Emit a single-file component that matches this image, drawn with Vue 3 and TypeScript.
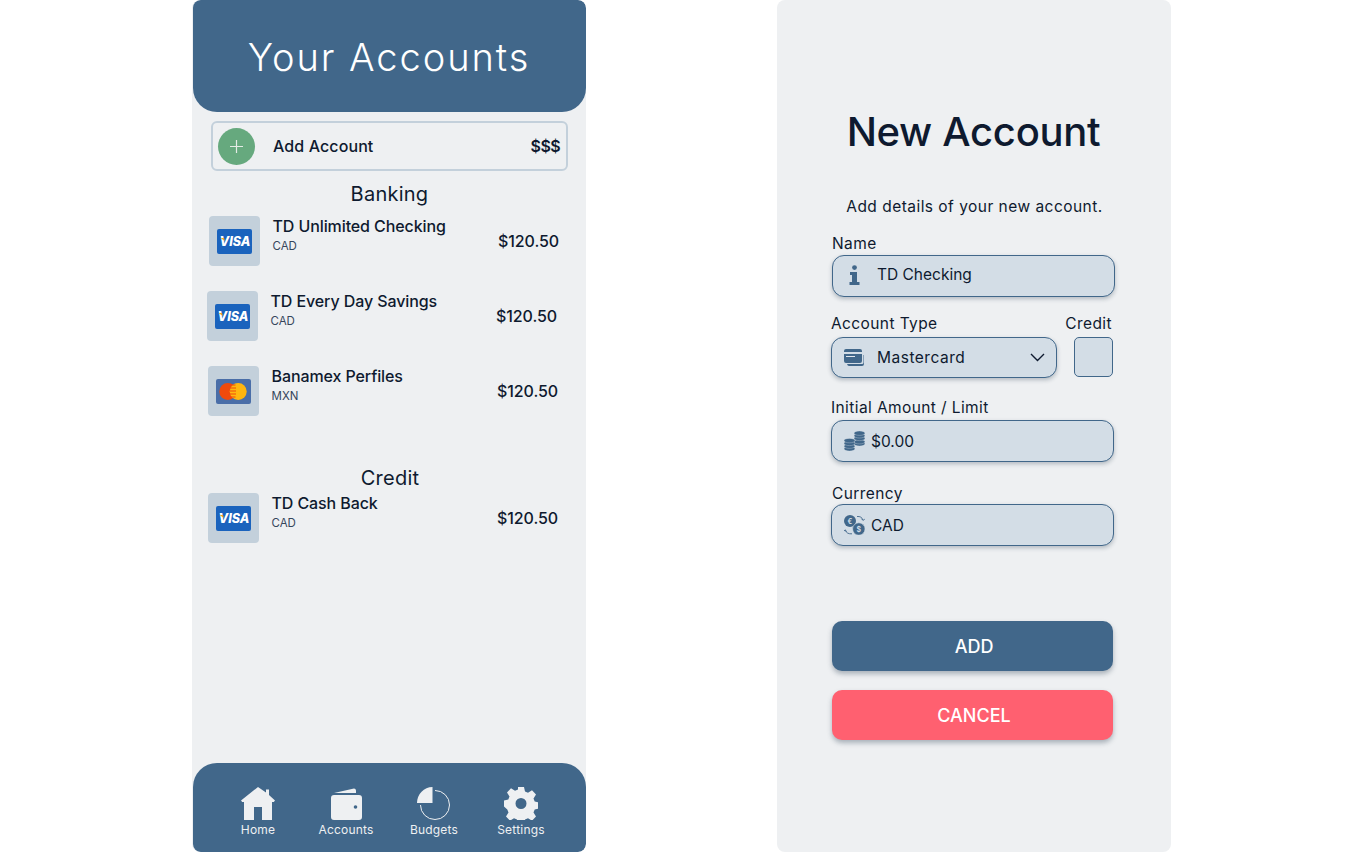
<script setup lang="ts">
interface Account { name: string; cur: string; brand: 'visa' | 'mc'; offset: number }
const banking: Account[] = [
  { name: 'TD Unlimited Checking', cur: 'CAD', brand: 'visa', offset: 17 },
  { name: 'TD Every Day Savings', cur: 'CAD', brand: 'visa', offset: 15 },
  { name: 'Banamex Perfiles', cur: 'MXN', brand: 'mc', offset: 16 },
]
const credit: Account[] = [{ name: 'TD Cash Back', cur: 'CAD', brand: 'visa', offset: 16 }]
const groups = [
  { title: 'Banking', cls: 'banking', items: banking },
  { title: 'Credit', cls: 'credit', items: credit },
]
</script>

<template>
  <div class="page">
    <section class="panel">
      <header class="head"><h1>Your Accounts</h1></header>
      <div class="add">
        <span class="plus">
          <svg width="15" height="15" viewBox="0 0 15 15"><path d="M7.5 1v13M1 7.5h13" stroke="#e4ece6" stroke-width="1.2" /></svg>
        </span>
        <span class="add-label">Add Account</span>
        <span class="add-money">$$$</span>
      </div>
      <div v-for="g in groups" :key="g.title" :class="g.cls">
        <h2>{{ g.title }}</h2>
        <div class="rows">
          <div v-for="a in g.items" :key="a.name" class="row" :style="{ marginLeft: a.offset + 'px' }">
            <span class="thumb">
              <svg v-if="a.brand === 'visa'" width="35" height="25" viewBox="0 0 35 25">
                <rect width="35" height="25" rx="2" fill="#1a63bd" />
                <text x="18" y="17.2" text-anchor="middle" class="visa">VISA</text>
                <path d="M3.500 9h3.500l.8 3z" fill="#f2a71c" />
              </svg>
              <svg v-else width="35" height="25" viewBox="0 0 35 25">
                <rect width="35" height="25" rx="2" fill="#4a6ea8" />
                <circle cx="11.800" cy="12.500" r="8.500" fill="#f04a0c" />
                <circle cx="22.200" cy="12.500" r="8.500" fill="#ffb60f" />
                <path d="M14.500 6h5M14 9h6M14 12h6M14 15h6M14.500 18h5" stroke="#f04a0c" stroke-width="1.200" />
              </svg>
            </span>
            <span class="info">
              <span class="name">{{ a.name }}</span>
              <span class="cur">{{ a.cur }}</span>
            </span>
            <span class="amount">$120.50</span>
          </div>
        </div>
      </div>
      <nav class="nav">
        <div class="nav-item">
          <svg width="36" height="33" viewBox="0 0 36 33"><path fill="#eef0f2" d="M18 0 26 5.500V2.500h3v5.500l6 5.500-1.200 1.500H32V33H22V20h-8v13H4V15H2.200L1 13.500z" /></svg>
          <span>Home</span>
        </div>
        <div class="nav-item">
          <svg width="32" height="33" viewBox="0 0 32 33"><path fill="#eef0f2" d="M4 6 24 1.500q1.800 0 2 2V6zM4 8h25q3 0 3 3v19q0 3-3 3H4q-3 0-3-3V11q0-3 3-3z" /><circle cx="25.500" cy="20" r="1.800" fill="#41678a" /></svg>
          <span>Accounts</span>
        </div>
        <div class="nav-item">
          <svg width="34" height="33" viewBox="0 0 34 33"><path fill="none" stroke="#eef0f2" stroke-width="1" d="M18 3.500a14.500 14.500 0 1 1-14.500 14.500" /><path fill="#eef0f2" d="M15.500 0v16H0C0 7 7 0 15.500 0z" /></svg>
          <span>Budgets</span>
        </div>
        <div class="nav-item">
          <svg width="34" height="33" viewBox="0 0 34 33"><path fill="#eef0f2" fill-rule="evenodd" d="M14 0h6l1 4.500 3 1.300 4-2.500 4 4.200-2.500 4 1.200 3 4.300 1v6l-4.300 1-1.200 3 2.500 4-4 4.200-4-2.500-3 1.300-1 4.500h-6l-1-4.500-3-1.300-4 2.500-4-4.200 2.500-4-1.200-3L0 19.500v-6l4.300-1 1.200-3-2.500-4 4-4.200 4 2.500 3-1.300zM17 11a5.500 5.500 0 1 0 0 11 5.500 5.500 0 0 0 0-11z" /></svg>
          <span>Settings</span>
        </div>
      </nav>
    </section>

    <section class="panel form">
      <h1 class="title">New Account</h1>
      <p class="sub">Add details of your new account.</p>

      <label class="lbl lbl-name">Name</label>
      <div class="field f-name">
        <svg class="ic-info" width="11" height="20" viewBox="0 0 11 20"><circle cx="5.500" cy="2.600" r="2.400" fill="#41678a" /><path fill="#41678a" d="M1 7h7v10h2.500v3H.5v-3H3v-7H1z" /></svg>
        <span>TD Checking</span>
      </div>

      <div class="pair-labels">
        <label class="lbl">Account Type</label>
        <label class="lbl">Credit</label>
      </div>
      <div class="pair">
        <div class="field f-select">
          <svg class="ic-card" width="20" height="17" viewBox="0 0 20 17"><path fill="#41678a" d="M2 0h14q2 0 2 2v1H0V2q0-2 2-2zM0 5h18v7q0 2-2 2H2q-2 0-2-2z" /><path fill="#e3e8ee" d="M2 7h9v1H2z" /><path fill="#41678a" d="M3 15h15q1.500 0 1.500-1.500V6h.5v9q0 2-2 2H5q-1.500 0-2-2z" /></svg>
          <span>Mastercard</span>
          <svg class="chev" width="15" height="9" viewBox="0 0 15 9"><path d="m1 1 6.500 6.500L14 1" fill="none" stroke="#0e1a2f" stroke-width="1.400" /></svg>
        </div>
        <div class="check"></div>
      </div>

      <label class="lbl lbl-init">Initial Amount / Limit</label>
      <div class="field f-init">
        <svg width="21" height="20" viewBox="0 0 21 20">
          <g fill="#41678a" stroke="#d3dde6" stroke-width=".35">
            <ellipse cx="15.500" cy="12.800" rx="5.500" ry="2.200" />
            <ellipse cx="15.500" cy="10.700" rx="5.500" ry="2.200" />
            <ellipse cx="15.500" cy="7.400" rx="5.500" ry="2.200" />
            <ellipse cx="15.500" cy="4.800" rx="5.500" ry="2.200" />
            <ellipse cx="15.500" cy="2.200" rx="5.500" ry="2.200" />
            <ellipse cx="5.500" cy="17.800" rx="5.500" ry="2.200" />
            <ellipse cx="5.500" cy="15.200" rx="5.500" ry="2.200" />
            <ellipse cx="5.500" cy="12.400" rx="5.500" ry="2.200" />
            <ellipse cx="5.500" cy="9.600" rx="5.500" ry="2.200" />
          </g>
        </svg>
        <span>$0.00</span>
      </div>

      <label class="lbl lbl-cur">Currency</label>
      <div class="field f-cur">
        <svg width="21" height="20" viewBox="0 0 21 20"><path d="M13 1.500q4.500-.5 6 3.500M17.500 3.800 19.200 5.500 20.800 3.800M8 18.800q-5 .5-6.800-3.500M2.800 16.500 1 14.800-.4 16.500" fill="none" stroke="#41678a" stroke-width=".9" /><circle cx="6" cy="6" r="6" fill="#41678a" /><circle cx="14.800" cy="14" r="6.200" fill="#41678a" stroke="#d3dde6" stroke-width=".6" /><text x="6" y="8.500" class="sym" text-anchor="middle">€</text><text x="14.800" y="16.800" class="sym" text-anchor="middle">$</text></svg>
        <span>CAD</span>
      </div>

      <button class="btn add-btn">ADD</button>
      <button class="btn cancel-btn">CANCEL</button>
    </section>
  </div>
</template>

<style scoped>
.page {
  display: flex;
  gap: 191px;
  padding-left: 192px;
  height: 852px;
  background: #fff;
  font-family: Inter, "Noto Sans", sans-serif;
  color: #0e1a2f;
  overflow: hidden;
}
.panel {
  width: 394px;
  height: 852px;
  background: #eef0f2;
  display: flex;
  flex-direction: column;
  border-radius: 8px;
  flex: none;
  overflow: hidden;
}
.head {
  height: 112px;
  margin-left: 1px;
  background: #41678a;
  border-radius: 8px 8px 24px 24px;
  display: flex;
  align-items: center;
  justify-content: center;
  flex: none;
}
.head h1 {
  margin: 0 0 -1px -1px;
  font-size: 38px;
  font-weight: 300;
  letter-spacing: 1.95px;
  color: #fff;
}
.add {
  box-sizing: border-box;
  height: 50px;
  width: 357px;
  margin: 9px 0 0 19px;
  border: 2px solid #c3d0db;
  border-radius: 6px;
  display: flex;
  align-items: center;
  padding: 0 6px 0 5px;
  flex: none;
}
.plus {
  width: 37px;
  height: 37px;
  border-radius: 50%;
  background: #66a97e;
  display: flex;
  align-items: center;
  justify-content: center;
}
.add-label {
  margin-left: 18px;
  font-size: 16px;
  font-weight: 500;
  letter-spacing: 0.1px;
}
.add-money {
  margin-left: auto;
  font-size: 16px;
  font-weight: 600;
  letter-spacing: -0.6px;
}
h2 {
  margin: 0;
  font-size: 20px;
  font-weight: 400;
  line-height: 24px;
  text-align: center;
  letter-spacing: 0.25px;
}
.banking { margin-top: 11px; }
.banking h2 { margin-bottom: 10px; margin-left: 1px; }
.credit { margin-top: 50px; }
.credit h2 { margin-bottom: 3px; margin-left: 2px; }
.rows {
  display: flex;
  flex-direction: column;
  gap: 25px;
}
.row {
  display: flex;
  align-items: center;
  width: 350px;
  height: 50px;
}
.thumb {
  width: 51px;
  height: 50px;
  border-radius: 4px;
  background: #c3d0db;
  display: flex;
  align-items: center;
  justify-content: center;
  flex: none;
}
.visa {
  font: italic 800 12.500px Inter, sans-serif;
  fill: #fff;
}
.info {
  display: flex;
  flex-direction: column;
  margin: -14px 0 0 12.500px;
  flex: 1;
}
.name {
  font-size: 16px;
  font-weight: 500;
  line-height: 22px;
  letter-spacing: -0.1px;
  white-space: nowrap;
}
.cur {
  font-size: 11.500px;
  line-height: 16px;
  margin-top: 1px;
  color: #36465c;
}
.amount {
  font-size: 16px;
  font-weight: 500;
  letter-spacing: -0.1px;
}
.nav {
  margin: auto 0 0 1px;
  height: 89px;
  background: #41678a;
  border-radius: 24px 24px 8px 8px;
  display: flex;
  flex: none;
  box-sizing: border-box;
  padding: 24px 0 0 21px;
}
.nav-item {
  width: 88px;
  display: flex;
  flex-direction: column;
  align-items: center;
  color: #eef0f2;
  font-size: 12px;
  line-height: 15px;
}
.nav-item span { margin-top: 2px; letter-spacing: 0.2px; }
.nav-item:nth-child(4) { margin-left: -1px; }

.title {
  margin: 108px 0 0 -1px;
  font-size: 40px;
  font-weight: 500;
  line-height: 48px;
  text-align: center;
  letter-spacing: -0.3px;
}
.sub {
  margin: 39px 0 0 1px;
  font-size: 15.500px;
  line-height: 24px;
  text-align: center;
  letter-spacing: 0.47px;
}
.lbl {
  display: block;
  font-size: 15.500px;
  line-height: 20px;
  letter-spacing: 0.4px;
}
.lbl-name { margin: 15px 0 1px 55px; }
.field {
  box-sizing: border-box;
  height: 42px;
  width: 283px;
  margin-left: 54px;
  background: #d3dde6;
  border: 1px solid #41678a;
  border-radius: 12px;
  box-shadow: 0 2px 4px rgba(40, 60, 80, 0.3);
  display: flex;
  align-items: center;
  font-size: 15.500px;
  flex: none;
}
.f-name { margin-left: 55px; padding: 0 0 3px 16px; gap: 17px; }
.pair-labels {
  display: flex;
  justify-content: space-between;
  width: 281px;
  margin: 17px 0 3px 54px;
}
.pair { display: flex; align-items: flex-start; }
.f-select {
  width: 226px;
  height: 41px;
  padding: 0 11px 0 12px;
  gap: 13px;
  letter-spacing: 0.5px;
}
.chev { margin-left: auto; }
.check {
  box-sizing: border-box;
  width: 39px;
  height: 40px;
  margin-left: 17px;
  background: #d3dde6;
  border: 1px solid #41678a;
  border-radius: 5px;
}
.lbl-init { margin: 20px 0 2px 54px; }
.f-init, .f-cur { padding-left: 12px; gap: 6px; }
.lbl-cur { margin: 22px 0 0 55px; }
.sym {
  font: 700 7px Inter, sans-serif;
  fill: #d3dde6;
}
.btn {
  display: block;
  width: 281px;
  height: 50px;
  margin-left: 55px;
  padding: 0 0 0 3px;
  border: 0;
  border-radius: 10px;
  color: #fff;
  font-family: Inter, sans-serif;
  font-size: 18px;
  font-weight: 500;
  box-shadow: 0 3px 5px rgba(40, 60, 80, 0.35);
  flex: none;
}
.add-btn { margin-top: 75px; background: #41678a; }
.cancel-btn { margin-top: 19px; background: #ff6070; }
</style>
